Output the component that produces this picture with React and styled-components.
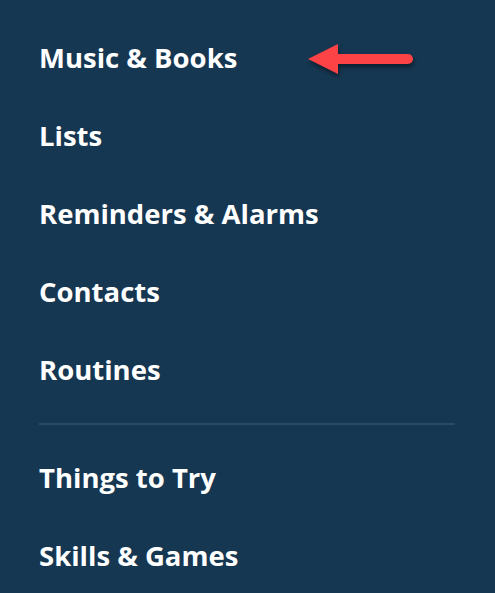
import React from "react";
import styled, { createGlobalStyle } from "styled-components";

const GlobalStyle = createGlobalStyle`
    html, body {
        margin: 0;
        padding: 0;
        background-color: #163752;
    }
`;

const Container = styled.nav`
    width: 495px;
    height: 593px;
    overflow: hidden;
    background-color: #163752;
    padding-top: 20px;
    box-sizing: border-box;
    font-family: "Open Sans", "Noto Sans", sans-serif;
`;

const Item = styled.div`
    position: relative;
    height: 78px;
    box-sizing: border-box;
    padding-bottom: 4px;
    display: flex;
    align-items: center;
    padding-left: 39px;
    color: #ffffff;
    font-size: 27.5px;
    font-weight: 700;
`;

const Divider = styled.hr`
    margin: 13px 40px 15px 39px;
    border: none;
    height: 2px;
    background-color: #2b4a66;
`;

const Arrow = styled.svg`
    position: absolute;
    left: 304px;
    top: 20px;
    filter: drop-shadow(1px 3px 2px rgba(0, 0, 0, 0.45));
`;

const topItems = ["Music & Books", "Lists", "Reminders & Alarms", "Contacts", "Routines"];
const bottomItems = ["Things to Try", "Skills & Games"];

const App = () => {
    return (
        <>
            <GlobalStyle />
            <Container>
                {topItems.map((label, i) => (
                    <Item key={label}>
                        {label}
                        {i === 0 && (
                            <Arrow width="116" height="40" viewBox="0 0 116 40">
                                <path d="M4 19 L34 4 L34 34 Z" fill="#fd4346" />
                                <line
                                    x1="32"
                                    y1="19"
                                    x2="104"
                                    y2="19"
                                    stroke="#fd4346"
                                    strokeWidth="10"
                                    strokeLinecap="round"
                                />
                            </Arrow>
                        )}
                    </Item>
                ))}
                <Divider />
                {bottomItems.map((label) => (
                    <Item key={label}>{label}</Item>
                ))}
            </Container>
        </>
    );
};

export default App;
